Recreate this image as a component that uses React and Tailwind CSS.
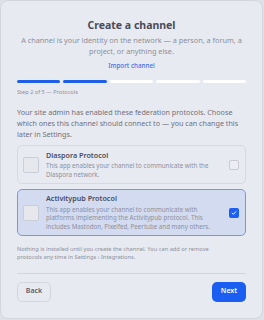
import React from 'react';

function ProtoIcon() {
  return (
    <div className="w-[16px] h-[16px] shrink-0 rounded-[2px] border border-[#cbced6] bg-[#e6e8ee]" />
  );
}

function ProtocolCard({ name, desc, checked }) {
  return (
    <div
      className={
        checked
          ? 'flex items-center gap-[7px] rounded-[5px] border border-[#7297ee] bg-[#d3dbf1] pl-[5px] pr-[5px] pt-[4.5px] pb-[3.5px]'
          : 'flex items-center gap-[7px] rounded-[5px] border border-[#d6d9e1] bg-[#e8eaf1] pl-[5px] pr-[5px] pt-[4.5px] pb-[3.5px]'
      }
    >
      <ProtoIcon />
      <div className="flex-1 min-w-0">
        <div className="text-[7.2px] leading-[9px] font-semibold text-[#4b4e5d]">{name}</div>
        <div className="mt-[2.5px] text-[6.2px] leading-[8.5px] text-[#8d909c]">{desc}</div>
      </div>
      {checked ? (
        <div className="w-[10px] h-[10px] mr-[1px] shrink-0 rounded-[2px] bg-[#1d5ff0] flex items-center justify-center">
          <svg width="6" height="6" viewBox="0 0 10 10" fill="none">
            <path d="M2 5.2l2 2 4-4.4" stroke="white" strokeWidth="1.6" strokeLinecap="round" strokeLinejoin="round" />
          </svg>
        </div>
      ) : (
        <div className="w-[10px] h-[10px] mr-[1px] shrink-0 rounded-[2px] border border-[#c8cbd4] bg-[#eceef3]" />
      )}
    </div>
  );
}

export default function App() {
  const steps = [true, true, false, false, false];
  return (
    <div className="w-[264px] h-[320px] bg-[#dfe1e8] font-['Noto_Sans',sans-serif]">
      <div className="w-[263px] h-[319px] rounded-[8px] border border-[#d3d6de] bg-[#e8eaf1] px-[16px] pt-[17px] flex flex-col">
        {/* Header */}
        <div className="text-center">
          <h1 className="text-[10.5px] leading-[14px] font-bold text-[#484b5c]">Create a channel</h1>
          <p className="mt-[3px] text-[7.3px] leading-[11px] text-[#8b8e9b]">
            A channel is your identity on the network — a person, a forum, a project, or anything else.
          </p>
          <div className="mt-[3.5px] text-[6.3px] leading-[9px] font-medium text-[#3f6fee]">Import channel</div>
        </div>

        {/* Progress */}
        <div className="mt-[10.5px] flex gap-[3px]">
          {steps.map((done, i) => (
            <div key={i} className={done ? 'h-[3px] flex-1 rounded-full bg-[#1f5fe8]' : 'h-[3px] flex-1 rounded-full bg-white'} />
          ))}
        </div>
        <div className="mt-[5px] text-[5.6px] leading-[8px] text-[#8d909c]">Step 2 of 5 — Protocols</div>

        <p className="mt-[10.5px] text-[7.2px] leading-[11px] text-[#6e717e]">
          Your site admin has enabled these federation protocols. Choose which ones this channel should connect to — you can change this later in Settings.
        </p>

        {/* Protocols */}
        <div className="mt-[5.5px] flex flex-col gap-[5px]">
          <ProtocolCard
            name="Diaspora Protocol"
            desc="This app enables your channel to communicate with the Diaspora network."
          />
          <ProtocolCard
            name="Activitypub Protocol"
            desc="This app enables your channel to communicate with platforms implementing the Activitypub protocol. This includes Mastodon, Pixelfed, Peertube and many others."
            checked
          />
        </div>

        <p className="mt-[9px] max-w-[214px] text-[5.7px] leading-[8px] text-[#8d909c]">
          Nothing is installed until you create the channel. You can add or remove protocols any time in Settings › Integrations.
        </p>

        <div className="mt-[12px] border-t border-[#d3d6de]" />

        {/* Footer */}
        <div className="mt-[8px] flex justify-between">
          <button className="h-[20px] w-[34px] rounded-[5px] border border-[#d3d6de] bg-[#e8eaf1] text-[7px] font-semibold text-[#5b5e6b]">
            Back
          </button>
          <button className="h-[20px] w-[34px] rounded-[5px] bg-[#1a5ff2] text-[7px] font-semibold text-white">
            Next
          </button>
        </div>
      </div>
    </div>
  );
}
